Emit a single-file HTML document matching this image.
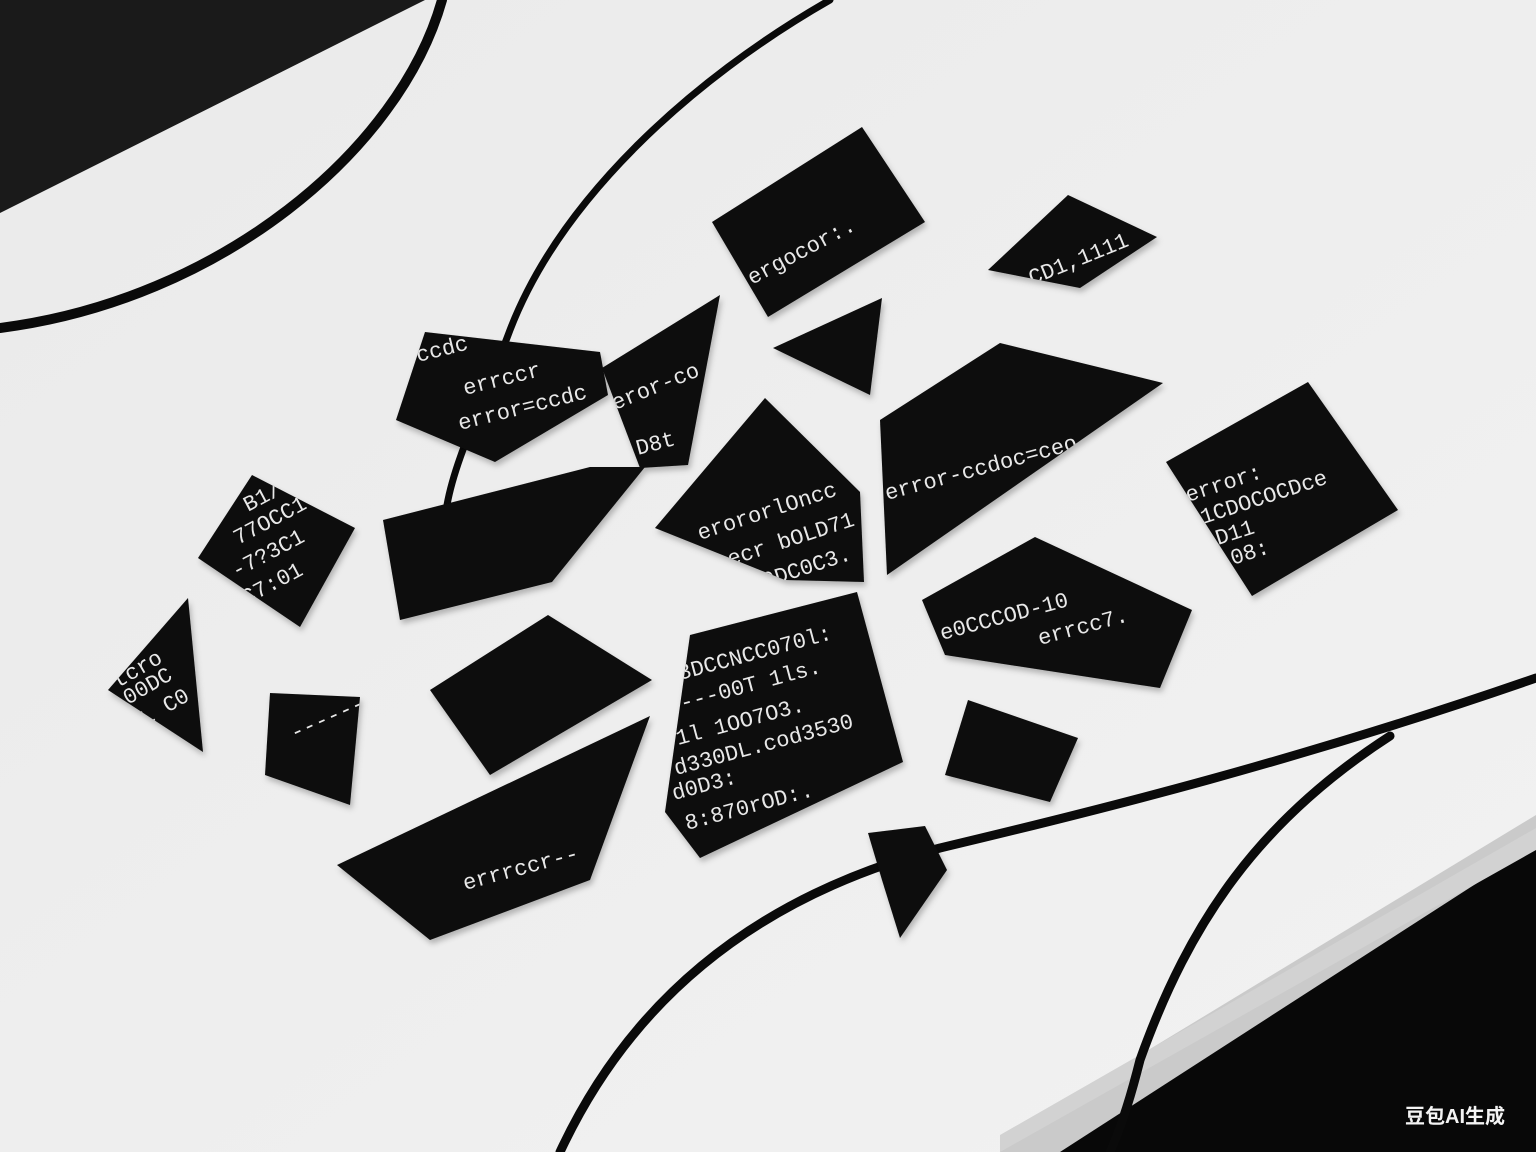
<!DOCTYPE html>
<html><head><meta charset="utf-8"><style>
html,body{margin:0;padding:0;width:1536px;height:1152px;overflow:hidden;background:#ededed}
svg{display:block}
text{font-family:"Liberation Mono",monospace;fill:#e8e8e8;font-size:22px}
</style></head><body>
<svg width="1536" height="1152" viewBox="0 0 1536 1152" xmlns="http://www.w3.org/2000/svg">
<defs>
<linearGradient id="bg" x1="0" y1="0" x2="1" y2="1"><stop offset="0" stop-color="#eaeaea"/><stop offset="1" stop-color="#f2f2f2"/></linearGradient>
<filter id="sh" x="-10%" y="-10%" width="130%" height="130%"><feDropShadow dx="2" dy="4" stdDeviation="3" flood-color="#000" flood-opacity="0.25"/></filter>
<polygon id="p1" points="712,222 862,127 925,222 768,317"/>
<polygon id="p2" points="988,270 1068,195 1157,237 1080,288"/>
<polygon id="p4" points="425,332 600,352 608,395 495,462 396,420"/>
<polygon id="p5" points="602,368 720,295 688,465 640,468"/>
<polygon id="p7" points="655,528 765,398 860,492 864,582 785,580"/>
<polygon id="p8" points="880,420 1000,343 1163,383 887,575"/>
<polygon id="p9" points="1166,462 1308,382 1398,510 1252,596"/>
<polygon id="p10" points="198,558 252,475 355,528 300,627"/>
<polygon id="p11" points="108,690 188,598 203,752"/>
<polygon id="p12" points="270,693 360,697 350,805 265,775"/>
<polygon id="p14" points="690,635 857,592 903,762 700,858 665,812"/>
<polygon id="p15" points="922,600 1035,537 1192,610 1160,688 945,655"/>
<polygon id="p17" points="337,865 650,716 590,880 430,940"/>
<clipPath id="c1"><use href="#p1"/></clipPath>
<clipPath id="c2"><use href="#p2"/></clipPath>
<clipPath id="c4"><use href="#p4"/></clipPath>
<clipPath id="c5"><use href="#p5"/></clipPath>
<clipPath id="c7"><use href="#p7"/></clipPath>
<clipPath id="c8"><use href="#p8"/></clipPath>
<clipPath id="c9"><use href="#p9"/></clipPath>
<clipPath id="c10"><use href="#p10"/></clipPath>
<clipPath id="c11"><use href="#p11"/></clipPath>
<clipPath id="c12"><use href="#p12"/></clipPath>
<clipPath id="c14"><use href="#p14"/></clipPath>
<clipPath id="c15"><use href="#p15"/></clipPath>
<clipPath id="c17"><use href="#p17"/></clipPath>
</defs>
<rect width="1536" height="1152" fill="url(#bg)"/>
<polygon points="0,0 425,0 0,213" fill="#1a1a1a"/>
<polygon points="1536,815 1536,1152 1000,1152 1000,1140" fill="#cacaca"/>
<polygon points="1536,845 1536,1152 1060,1152" fill="#080808"/>
<polygon points="1536,828 1000,1135 1000,1152 1536,850" fill="#d2d2d2"/>
<g fill="none" stroke="#0a0a0a" stroke-linecap="round">
<path d="M442,0 C400,150 220,300 0,328" stroke-width="10"/>
<path d="M830,0 C690,80 560,200 510,330 C480,410 455,460 447,505" stroke-width="7"/>
<path d="M1536,678 C1300,760 1100,810 940,848 C780,890 640,980 560,1152" stroke-width="9"/>
<path d="M1390,736 C1260,820 1190,920 1140,1060 C1130,1100 1120,1130 1110,1152" stroke-width="9"/>
</g>
<g fill="#0b0b0b" filter="url(#sh)">
<use href="#p1"/><use href="#p2"/>
<polygon points="773,348 882,298 870,395"/>
<use href="#p4"/><use href="#p5"/>
<polygon points="383,520 590,467 645,467 552,582 400,620"/>
<use href="#p7"/><use href="#p8"/><use href="#p9"/><use href="#p10"/><use href="#p11"/><use href="#p12"/>
<polygon points="430,690 548,615 652,680 490,775"/>
<use href="#p14"/><use href="#p15"/>
<polygon points="968,700 1078,738 1050,802 945,775"/>
<use href="#p17"/>
<polygon points="868,833 925,826 947,870 900,938 882,880"/>
</g>
<g clip-path="url(#c1)"><text transform="translate(752,285) rotate(-28)" font-size="20">ergocor:.</text></g>
<g clip-path="url(#c2)"><text transform="translate(1032,285) rotate(-22)" font-size="18">CD1,1111</text></g>
<g clip-path="url(#c4)">
<text transform="translate(465,395) rotate(-14)">errccr</text>
<text transform="translate(460,430) rotate(-14)">error=ccdc</text>
<text transform="translate(418,362) rotate(-14)" font-size="18">ccdc</text></g>
<g clip-path="url(#c5)">
<text transform="translate(615,410) rotate(-22)" font-size="20">eror-co</text>
<text transform="translate(638,455) rotate(-15)" font-size="18">D8t</text></g>
<g clip-path="url(#c7)">
<text transform="translate(700,540) rotate(-18)" font-size="20">erororlOncc</text>
<text transform="translate(730,566) rotate(-18)" font-size="20">ecr bOLD71</text>
<text transform="translate(752,592) rotate(-18)" font-size="20">00DC0C3.</text></g>
<g clip-path="url(#c8)"><text transform="translate(887,500) rotate(-15)" font-size="26">error-ccdoc=ceo</text></g>
<g clip-path="url(#c9)">
<text transform="translate(1188,502) rotate(-18)" font-size="20">error:</text>
<text transform="translate(1203,524) rotate(-18)" font-size="20">1CDOCOCDce</text>
<text transform="translate(1218,545) rotate(-18)" font-size="20">D11</text>
<text transform="translate(1233,565) rotate(-18)" font-size="20">08:</text></g>
<g clip-path="url(#c10)">
<text transform="translate(248,512) rotate(-28)" font-size="18">B1/7O4</text>
<text transform="translate(238,545) rotate(-28)" font-size="20">77OCC1</text>
<text transform="translate(236,578) rotate(-28)" font-size="20">-7?3C1</text>
<text transform="translate(246,605) rotate(-28)" font-size="18">C7:01</text></g>
<g clip-path="url(#c11)">
<text transform="translate(118,688) rotate(-30)" font-size="20">tcro</text>
<text transform="translate(128,705) rotate(-30)" font-size="20">00DC</text>
<text transform="translate(145,726) rotate(-30)" font-size="20">L C0</text></g>
<g clip-path="url(#c12)"><text transform="translate(294,740) rotate(-24)" font-size="12">------------</text></g>
<g clip-path="url(#c14)">
<text transform="translate(680,680) rotate(-15)" font-size="19">3DCCNCC070l:</text>
<text transform="translate(682,710) rotate(-15)" font-size="19">---00T 1ls.</text>
<text transform="translate(678,745) rotate(-15)" font-size="19">1l 1OO7O3.</text>
<text transform="translate(676,775) rotate(-15)" font-size="19">d330DL.cod3530</text>
<text transform="translate(674,800) rotate(-15)" font-size="19">d0D3:</text>
<text transform="translate(687,830) rotate(-15)" font-size="19">8:870rOD:.</text></g>
<g clip-path="url(#c15)">
<text transform="translate(942,640) rotate(-15)" font-size="20">e0CCCOD-10</text>
<text transform="translate(1040,645) rotate(-15)" font-size="22">errcc7.</text></g>
<g clip-path="url(#c17)"><text transform="translate(465,890) rotate(-15)" font-size="22">errrccr--</text></g>
<text x="1405" y="1123" style="font-family:'Liberation Sans','Noto Sans CJK SC',sans-serif;font-weight:bold;font-size:20px;fill:#f4f4f4">豆包AI生成</text>
</svg>
</body></html>
